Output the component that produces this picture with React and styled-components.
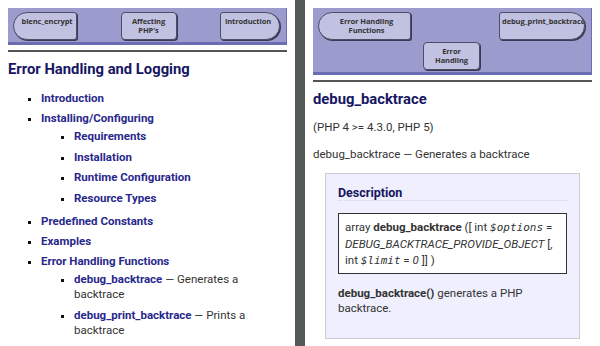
import React from 'react';
import styled, { createGlobalStyle } from 'styled-components';

const GlobalStyle = createGlobalStyle`
    html, body {
        margin: 0;
        padding: 0;
    }
    body {
        font-family: Roboto, "Liberation Sans", sans-serif;
        color: #333;
        background: #555a58;
    }
`;

const Page = styled.div`
    display: flex;
    gap: 10px;
    width: 600px;
    height: 346px;
    overflow: hidden;
    background: #555a58;
`;

const Panel = styled.div`
    flex: 0 0 295px;
    box-sizing: border-box;
    background: #fff;
    padding: 8px 8px 0 8px;
    overflow: hidden;
`;

const NavBar = styled.div`
    display: grid;
    grid-template-columns: max-content 1fr max-content;
    row-gap: 2px;
    align-items: start;
    background: #9b9bcd;
    border-right: 1px solid #6c6cb2;
    border-bottom: 3px solid #6c6cb2;
    padding: 4px 6px 2px 5px;
`;

const NavButton = styled.a`
    display: block;
    box-sizing: border-box;
    width: ${({$w}) => $w}px;
    height: 28px;
    padding: 4px ${({$kind}) => $kind === 'next' ? '6px' : '2px'} 0 ${({$kind}) => $kind === 'prev' ? '6px' : '2px'};
    background: #c1c1e2;
    border: 1px solid #4d4d66;
    box-shadow: 1px 1px 0 #3a3a55;
    border-radius: ${({$kind}) =>
        $kind === 'prev' ? '14px 3px 3px 14px' :
        $kind === 'next' ? '3px 14px 14px 3px' : '4px'};
    font-family: "Open Sans", sans-serif;
    font-weight: 700;
    font-size: 7.5px;
    line-height: 9px;
    letter-spacing: -0.1px;
    color: #333;
    text-align: center;
    overflow: hidden;
    white-space: ${({$nowrap}) => $nowrap ? 'nowrap' : 'normal'};
    &.prev { grid-column: 1; grid-row: 1; }
    &.next { grid-column: 3; grid-row: 1; }
    &.up {
        grid-column: ${({$below}) => $below ? '1 / -1' : '2'};
        grid-row: ${({$below}) => $below ? '2' : '1'};
        justify-self: center;
    }
`;

const Rule = styled.hr`
    border: 0;
    border-top: 2px solid #555;
    margin: 5px 0 0 0;
`;

const Title = styled.h1`
    font-size: 14.8px;
    line-height: 18px;
    font-weight: 700;
    color: #161662;
    margin: 8px 0 0 0;
`;

const List = styled.ul`
    list-style: square;
    margin: ${({$nested}) => $nested ? '3px 0 8px 0' : '13px 0 0 0'};
    padding: 0 ${({$nested}) => $nested ? '0' : '4px'} 0 33px;
    font-size: 11.5px;
    line-height: 15px;
    li {
        margin-bottom: 5.4px;
    }
    li::marker {
        color: #111;
        font-size: 11px;
    }
`;

const Link = styled.a`
    color: #28288c;
    font-weight: 700;
    text-decoration: none;
`;

const Para = styled.p`
    margin: ${({$top}) => $top ?? 12}px 0 0 0;
    font-size: 11.5px;
    line-height: 15px;
    color: #333;
`;

const Section = styled.div`
    margin: 11px 12px 0 12px;
    padding: 11px 12px 22px 12px;
    background: #efeffd;
    border: 1px solid #cbcbd4;
`;

const SectionTitle = styled.h3`
    margin: 0;
    font-size: 12.5px;
    line-height: 15px;
    font-weight: 700;
    color: #161662;
    border-bottom: 1px dotted #d2d2e6;
`;

const Signature = styled.div`
    margin-top: 12px;
    padding: 5px 6px 4px 6px;
    background: #fff;
    border: 1px solid #333;
    font-size: 11.5px;
    line-height: 16.5px;
    color: #333;
`;

const Var = styled.code`
    font-family: "DejaVu Sans Mono", monospace;
    font-style: italic;
    font-size: 11px;
    line-height: 1;
`;

const Em = styled.em`
    font-style: italic;
`;

export default function App() {
    return (
        <>
            <GlobalStyle />
            <Page>
                <Panel>
                    <NavBar>
                        <NavButton className="prev" $kind="prev" $w={64}>blenc_encrypt</NavButton>
                        <NavButton className="up" $kind="up" $w={56}>Affecting PHP's</NavButton>
                        <NavButton className="next" $kind="next" $w={60}>Introduction</NavButton>
                    </NavBar>
                    <Rule />
                    <Title>Error Handling and Logging</Title>
                    <List>
                        <li><Link>Introduction</Link></li>
                        <li>
                            <Link>Installing/Configuring</Link>
                            <List $nested>
                                <li><Link>Requirements</Link></li>
                                <li><Link>Installation</Link></li>
                                <li><Link>Runtime Configuration</Link></li>
                                <li><Link>Resource Types</Link></li>
                            </List>
                        </li>
                        <li><Link>Predefined Constants</Link></li>
                        <li><Link>Examples</Link></li>
                        <li>
                            <Link>Error Handling Functions</Link>
                            <List $nested>
                                <li><Link>debug_backtrace</Link> — Generates a backtrace</li>
                                <li><Link>debug_print_backtrace</Link> — Prints a backtrace</li>
                            </List>
                        </li>
                    </List>
                </Panel>
                <Panel>
                    <NavBar>
                        <NavButton className="prev" $kind="prev" $w={93}>Error Handling Functions</NavButton>
                        <NavButton className="next" $kind="next" $w={86} $nowrap>debug_print_backtrace</NavButton>
                        <NavButton className="up" $kind="up" $w={57} $below>Error Handling</NavButton>
                    </NavBar>
                    <Rule />
                    <Title>debug_backtrace</Title>
                    <Para $top={12}>(PHP 4 &gt;= 4.3.0, PHP 5)</Para>
                    <Para>debug_backtrace — Generates a backtrace</Para>
                    <Section>
                        <SectionTitle>Description</SectionTitle>
                        <Signature>
                            array <strong>debug_backtrace</strong> ([ int <Var>$options</Var> = <Em>DEBUG_BACKTRACE_PROVIDE_OBJECT</Em> [, int <Var>$limit</Var> = <Em>0</Em> ]] )
                        </Signature>
                        <Para><strong>debug_backtrace()</strong> generates a PHP backtrace.</Para>
                    </Section>
                </Panel>
            </Page>
        </>
    );
}
